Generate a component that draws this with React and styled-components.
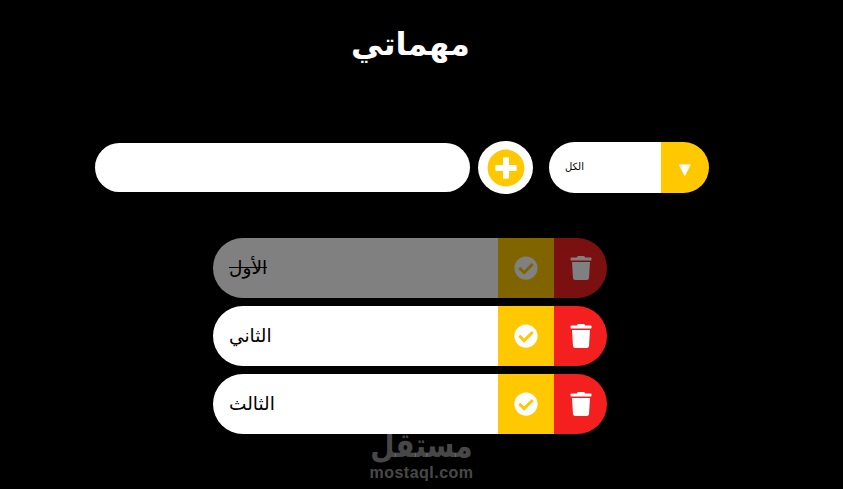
import React from 'react'
import styled, { createGlobalStyle } from 'styled-components'
import { FaCheckCircle, FaPlusCircle, FaTrash } from 'react-icons/fa'

const GlobalStyle = createGlobalStyle`
  * { box-sizing: border-box; }
  html, body { margin: 0; background: #000; }
  body { font-family: "Liberation Sans", "DejaVu Sans", "Noto Sans", sans-serif; color: #000; overflow: hidden; }
`

const Page = styled.div`
  position: relative;
  width: 843px;
  height: 489px;
  background: #000;
  overflow: hidden;
`

const Title = styled.h1`
  margin: 0;
  padding: 24px 22px 0 0;
  height: 141px;
  text-align: center;
  color: #fff;
  font-size: 32px;
  line-height: 40px;
  font-weight: 700;
`

const Form = styled.form`
  display: flex;
  align-items: center;
  height: 53px;
  padding-left: 95px;
`

const TaskInput = styled.input`
  width: 375px;
  height: 49px;
  border: none;
  border-radius: 25px;
  background: #fff;
  outline: none;
`

const AddButton = styled.button`
  display: flex;
  align-items: center;
  justify-content: center;
  width: 55px;
  height: 53px;
  margin-left: 8px;
  padding: 0;
  border: none;
  border-radius: 50%;
  background: #fff;
  color: #ffc800;
  font-size: 38px;
`

const Select = styled.div`
  display: flex;
  width: 160px;
  height: 51px;
  margin-left: 16px;
`

const SelectLabel = styled.span`
  flex: 1;
  padding-left: 16px;
  border-radius: 26px 0 0 26px;
  background: #fff;
  font-size: 10px;
  line-height: 49px;
`

const SelectArrow = styled.span`
  display: flex;
  align-items: center;
  justify-content: center;
  width: 48px;
  padding-top: 3px;
  border-radius: 0 26px 26px 0;
  background: #ffc800;
  color: #fff;
  font-size: 20px;
`

const List = styled.ul`
  display: flex;
  flex-direction: column;
  gap: 8px;
  width: 394px;
  margin: 44px 0 0 213px;
  padding: 0;
  list-style: none;
`

const Row = styled.li`
  display: flex;
  height: 60px;
  opacity: ${p => (p.$done ? 0.5 : 1)};
`

const Label = styled.span`
  flex: 1;
  padding-left: 16px;
  border-radius: 30px 0 0 30px;
  background: #fff;
  font-size: 18.5px;
  line-height: 60px;
  text-decoration: ${p => (p.$done ? 'line-through' : 'none')};
`

const ActionButton = styled.button`
  display: flex;
  align-items: center;
  justify-content: center;
  width: ${p => p.$width}px;
  padding: 0;
  border: none;
  border-radius: ${p => (p.$end ? '0 30px 30px 0' : '0')};
  background: ${p => p.$color};
  color: #fff;
  font-size: ${p => p.$size}px;
`

const Watermark = styled.div`
  position: absolute;
  left: 350px;
  top: 428px;
  width: 143px;
  text-align: center;
  color: rgba(255, 255, 255, 0.3);
  font-weight: 700;
  pointer-events: none;
`

const WatermarkArabic = styled.div`
  margin: 3px 0;
  font-family: "DejaVu Sans", sans-serif;
  font-size: 28px;
  line-height: 30px;
  transform: scaleY(1.2);
`

const WatermarkLatin = styled.div`
  font-size: 16px;
  line-height: 18px;
  letter-spacing: 0.5px;
`

const tasks = [
  { text: 'الأول', done: true },
  { text: 'الثاني', done: false },
  { text: 'الثالث', done: false },
]

export default function App() {
  return (
    <Page>
      <GlobalStyle />
      <Title>مهماتي</Title>
      <Form onSubmit={e => e.preventDefault()}>
        <TaskInput type="text" />
        <AddButton type="submit"><FaPlusCircle /></AddButton>
        <Select>
          <SelectLabel>الكل</SelectLabel>
          <SelectArrow>▼</SelectArrow>
        </Select>
      </Form>
      <List>
        {tasks.map(task => (
          <Row key={task.text} $done={task.done}>
            <Label $done={task.done}>{task.text}</Label>
            <ActionButton $width={56} $color="#ffc800" $size={24}><FaCheckCircle /></ActionButton>
            <ActionButton $width={53} $color="#f42020" $size={24} $end><FaTrash /></ActionButton>
          </Row>
        ))}
      </List>
      <Watermark>
        <WatermarkArabic>مستقل</WatermarkArabic>
        <WatermarkLatin>mostaql.com</WatermarkLatin>
      </Watermark>
    </Page>
  )
}
